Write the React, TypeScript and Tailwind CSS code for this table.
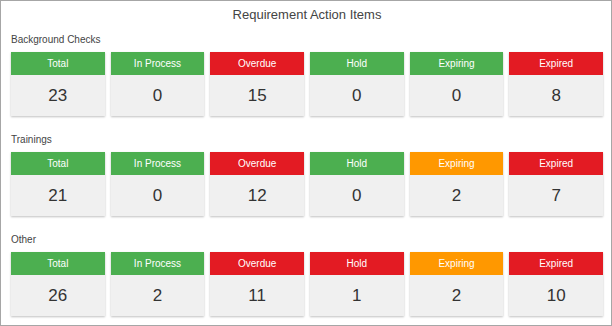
import React from 'react';

type Tone = 'green' | 'red' | 'orange';

type Stat = { label: string; value: number; tone: Tone };

const toneClass: Record<Tone, string> = {
  green: 'bg-[#4caf50]',
  red: 'bg-[#e31b23]',
  orange: 'bg-[#ff9800]',
};

const sections: { title: string; stats: Stat[] }[] = [
  {
    title: 'Background Checks',
    stats: [
      { label: 'Total', value: 23, tone: 'green' },
      { label: 'In Process', value: 0, tone: 'green' },
      { label: 'Overdue', value: 15, tone: 'red' },
      { label: 'Hold', value: 0, tone: 'green' },
      { label: 'Expiring', value: 0, tone: 'green' },
      { label: 'Expired', value: 8, tone: 'red' },
    ],
  },
  {
    title: 'Trainings',
    stats: [
      { label: 'Total', value: 21, tone: 'green' },
      { label: 'In Process', value: 0, tone: 'green' },
      { label: 'Overdue', value: 12, tone: 'red' },
      { label: 'Hold', value: 0, tone: 'green' },
      { label: 'Expiring', value: 2, tone: 'orange' },
      { label: 'Expired', value: 7, tone: 'red' },
    ],
  },
  {
    title: 'Other',
    stats: [
      { label: 'Total', value: 26, tone: 'green' },
      { label: 'In Process', value: 2, tone: 'green' },
      { label: 'Overdue', value: 11, tone: 'red' },
      { label: 'Hold', value: 1, tone: 'red' },
      { label: 'Expiring', value: 2, tone: 'orange' },
      { label: 'Expired', value: 10, tone: 'red' },
    ],
  },
];

const StatCard = ({ stat }: { stat: Stat }) => (
  <div className="flex flex-col shadow-[0_1px_2px_rgba(0,0,0,0.25)]">
    <div className={`${toneClass[stat.tone]} h-[23px] flex items-center justify-center text-white text-[10px]`}>
      {stat.label}
    </div>
    <div className="bg-[#f0f0f0] h-[41px] flex items-center justify-center text-[#333] text-[17px]">
      {stat.value}
    </div>
  </div>
);

export default function App() {
  return (
    <div className="w-[612px] h-[326px] border border-[#a6a6a6] bg-white pl-[10px] pr-[8px] font-['Liberation_Sans',Arial,sans-serif]">
      <div className="h-[27px] flex items-center justify-center text-[13px] text-[#444]">
        Requirement Action Items
      </div>
      {sections.map((section) => (
        <div key={section.title} className="mb-[12px]">
          <div className="h-[24px] leading-[24px] text-[10px] text-[#444]">{section.title}</div>
          <div className="grid grid-cols-6 gap-[6px]">
            {section.stats.map((stat) => (
              <StatCard key={stat.label} stat={stat} />
            ))}
          </div>
        </div>
      ))}
    </div>
  );
}
